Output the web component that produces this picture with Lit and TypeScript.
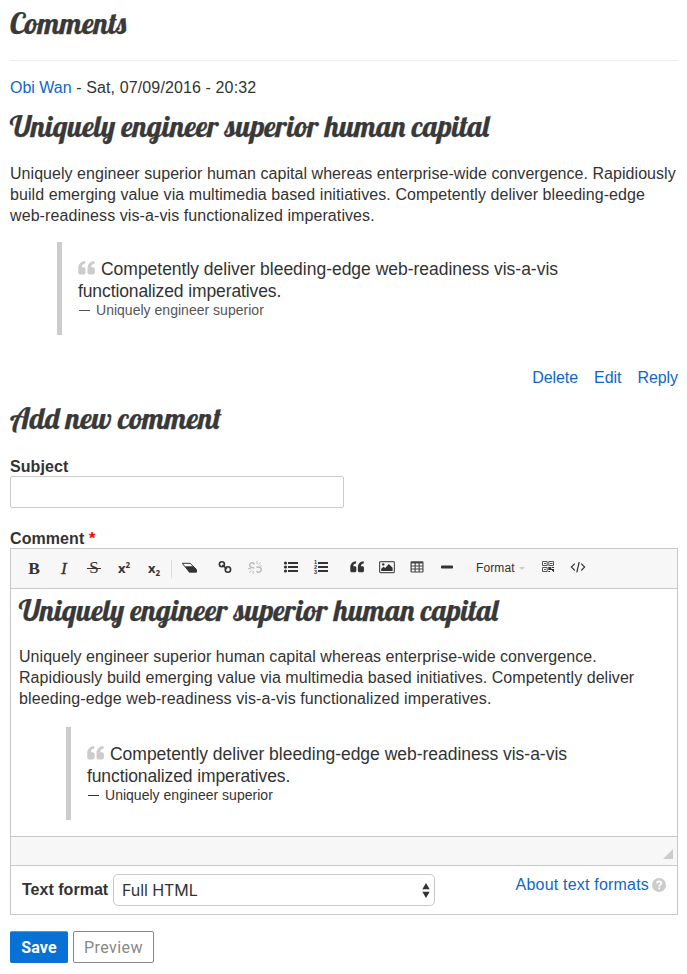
import { LitElement, html, css, svg } from "lit";
import { customElement, property } from "lit/decorators.js";

const quotePath = "M7.300 1C3 1.100.2 4.200.2 8.400v4.200c0 1.100.8 1.900 1.900 1.900h3.600c1.100 0 1.900-.8 1.900-1.900V9.100c0-1.100-.8-1.900-1.900-1.900H3.900C3.900 5.200 5 3.900 7.300 3.800zM16.600 1C12.300 1.100 9.500 4.200 9.500 8.400v4.200c0 1.100.8 1.900 1.900 1.900h3.600c1.100 0 1.900-.8 1.900-1.900V9.100c0-1.100-.8-1.900-1.900-1.900h-1.800C13.200 5.200 14.300 3.900 16.600 3.800z";

const icons: Record<string, unknown> = {
  eraser: svg`<path d="M.2 3.300h7.900l6.200 6v2.600H7.300z" fill="#f7f7f7" stroke="#333" stroke-width="1"/><path d="M3.200 6.300h7.700l3.900 3.700v2.400H7.200z" fill="#333"/>`,
  link: svg`<g fill="none" stroke="#333" stroke-width="1.600"><circle cx="4.900" cy="4.300" r="2.500"/><circle cx="10.900" cy="9.500" r="2.700"/><path d="M5.300 5l4.600 3.800"/></g>`,
  unlink: svg`<g fill="none" stroke="#bbb" stroke-width="1.500"><path d="M7.400 4.500a2.400 2.400 0 1 0-2.800 3l2.600.4M9.600 11a2.500 2.500 0 1 0 2.200-3.800L9.400 6.900"/><path stroke-width="1" d="M10 1v3M13.800 2.400l-2.300 2.200M14.600 6h-2M1 8.700h3M2.200 12.700l2.300-2.300M6.200 13.800v-3"/></g>`,
  ul: svg`<g fill="#333"><circle cx="2.500" cy="3" r="1.600"/><circle cx="2.500" cy="7" r="1.600"/><circle cx="2.500" cy="11" r="1.600"/><path d="M5 2h10v2H5zM5 6h10v2H5zM5 10h10v2H5z"/></g>`,
  ol: svg`<g fill="#333"><path d="M5 2h10v2H5zM5 6h10v2H5zM5 10h10v2H5z"/><g font-family="Liberation Sans" font-size="5.500" font-weight="700"><text x=".9" y="3.900">1</text><text x=".9" y="9">2</text><text x=".9" y="14">3</text></g></g>`,
  quote: svg`<path transform="translate(1.100 .4) scale(.82 .82)" fill="#333" d=${quotePath}/>`,
  image: svg`<rect x=".6" y="1.600" width="14.800" height="11" rx="1" fill="none" stroke="#555" stroke-width="1.200"/><path d="M2.200 11V8.800l2.400-2L6.200 8l3.600-3.900 3.800 3.700V11z" fill="#333"/><circle cx="4.200" cy="4.400" r="1.200" fill="#333"/>`,
  table: svg`<rect x="1.500" y="1.300" width="13" height="11.300" rx="1.300" fill="#444"/><path fill="#f7f7f7" d="M2.700 3.600h2.900v1.800H2.700zM6.700 3.600h2.900v1.800H6.700zM10.700 3.600h2.700v1.800h-2.700zM2.700 6.600h2.900v1.800H2.700zM6.700 6.600h2.900v1.800H6.700zM10.700 6.600h2.700v1.800h-2.700zM2.700 9.600h2.900v1.800H2.700zM6.700 9.600h2.900v1.800H6.700zM10.700 9.600h2.700v1.800h-2.700z"/>`,
  hr: svg`<rect x="2" y="5.500" width="12" height="3" rx=".8" fill="#333"/>`,
  blocks: svg`<g fill="none" stroke="#555"><path d="M2.500 1.500h4.700v4H2.500zM8.800 1.500h4.700v4H8.800zM2.500 7.500h4.700v4H2.500zM4 3.500h2M10 3.500h2.500M4 9.500h2"/></g><path fill="#333" d="M8.300 7h3v2h2.700v2h-2v-1H8.300zM8.300 11h1.700v1H8.300zM13 11h1v1h-1zM12 7h2v1h-2z"/>`,
  code: svg`<path d="M4.800 3.700L1.400 7.100l3.400 3.400M11.200 3.700l3.400 3.400-3.400 3.400M9.200 2L6.800 12.400" fill="none" stroke="#333" stroke-width="1.200"/>`,
};

@customElement("tool-button")
class ToolButton extends LitElement {
  @property() icon = "";
  static styles = css`
    :host { display: flex; width: 30px; height: 30px; align-items: center; justify-content: center; flex: none; }
    svg { display: block; width: 16px; height: 16px; }
  `;
  render() {
    return html`<svg viewBox="0 0 16 16">${icons[this.icon]}</svg>`;
  }
}

@customElement("pull-quote")
class PullQuote extends LitElement {
  static styles = css`
    :host { display: block; box-sizing: border-box; height: 93px; margin-left: 47px; border-left: 5px solid #ccc; padding: 16px 0 0 16px; color: #333; white-space: nowrap; }
    .line { font-size: 17.500px; line-height: 22px; height: 22px; display: flex; align-items: center; }
    .mark { width: 17px; height: 16px; margin: 0 6px 2px 0; flex: none; }
    .a { letter-spacing: -0.020px; }
    .b { letter-spacing: -0.110px; }
    .cite { font-size: 14px; line-height: 17px; color: var(--cite, #555); }
    .dash { display: inline-block; width: 18px; padding-left: 1px; box-sizing: border-box; }
    .dash i { display: block; width: 11px; height: 1px; background: currentColor; position: relative; top: -4px; }
    .c { letter-spacing: 0.020px; }
  `;
  render() {
    return html`
      <div class="line"><svg class="mark" viewBox="0 0 17 16"><path fill="#ccc" d=${quotePath} /></svg><span class="a">Competently deliver bleeding-edge web-readiness vis-a-vis</span></div>
      <div class="line"><span class="b">functionalized imperatives.</span></div>
      <div class="cite"><span class="dash"><i></i></span><span class="c">Uniquely engineer superior</span></div>
    `;
  }
}

@customElement("app-root")
class AppRoot extends LitElement {
  static styles = css`
    :host { display: block; box-sizing: border-box; width: 687px; height: 974px; padding: 0 9px 0 10px; background: #fff; color: #333; font: 16px/21px "Liberation Sans", Arial, sans-serif; overflow: hidden; }
    * { box-sizing: border-box; }
    h2, p { margin: 0; }
    h2 { font: 400 29.300px/40px Lobster, "Liberation Serif", serif; height: 40px; white-space: nowrap; color: #393939; -webkit-text-stroke: .250px #393939; }
    .t1 { height: 60px; padding-top: 3px; font-size: 29.700px; }
    .byline { border-top: 1px solid #eee; height: 46px; padding-top: 16px; }
    .date { letter-spacing: .120px; }
    a { color: #0f66ca; text-decoration: none; }
    .body { white-space: nowrap; padding-top: 17px; height: 96px; }
    .p1 { letter-spacing: .045px; }
    .p2 { letter-spacing: .070px; }
    .p3 { letter-spacing: .090px; }
    .q1 { letter-spacing: .040px; }
    .q2 { letter-spacing: .060px; }
    .q3 { letter-spacing: .100px; }
    .links { display: flex; justify-content: flex-end; gap: 16px; margin-top: 32px; height: 31px; letter-spacing: -.060px; }
    .t3 { height: 58px; font-size: 29.600px; }
    label, .label { font-weight: 700; display: block; line-height: 22px; height: 20px; letter-spacing: .080px; }
    .field { display: block; width: 334px; height: 32px; border: 1px solid #ccc; border-radius: 2px; background: #fff; padding: 0; margin-bottom: 20px; }
    .req { color: #f00; }
    .editor { border: 1px solid #c9c9c9; width: 668px; height: 318px; }
    .bar { display: flex; align-items: center; height: 40px; background: #f7f7f7; border-bottom: 1px solid #c9c9c9; padding: 0 0 2px 8px; }
    .letter { width: 30px; text-align: center; font: 700 17.500px/26px "Liberation Serif", serif; flex: none; }
    .it { font-style: italic; font-weight: 400; -webkit-text-stroke: .300px #333; }
    .strike { font-weight: 400; position: relative; font-size: 17px; }
    .strike::after { content: ""; position: absolute; left: 8px; right: 8px; top: 13px; height: 1px; background: #333; }
    .script { font: 700 13px/26px "Noto Sans", sans-serif; }
    .script small { font-size: 8px; line-height: 0; position: relative; }
    .sup small { top: -5px; }
    .sub small { top: 3px; }
    .sep { width: 1px; height: 18px; background: #ddd; margin: 3px 3px 0 2px; }
    .g { width: 5px; } .h { width: 6px; }
    .format { width: 65px; padding: 1px 0 0 8px; font-size: 12px; letter-spacing: .100px; display: flex; align-items: center; gap: 4px; }
    .caret { border: 3px solid transparent; border-top-color: #ccc; border-bottom: 0; }
    .content { height: 247px; padding: 1px 8px 0; }
    .content .body { height: 97px; padding-top: 16px; }
    .content pull-quote { --cite: #333; }
    .foot { height: 29px; border-top: 1px solid #c9c9c9; background: #f7f7f7; display: flex; justify-content: flex-end; align-items: flex-end; padding: 0 4px 6px; }
    .grip { border-left: 10px solid transparent; border-bottom: 10px solid #ccc; }
    .format-row { border: 1px solid #c9c9c9; border-top: 0; height: 49px; width: 668px; display: flex; padding: 8px 11px 0; margin-bottom: 16px; }
    .format-row .label { line-height: 31px; width: 91px; letter-spacing: .020px; }
    .select { width: 322px; height: 32px; border: 1px solid #c9c9c9; border-radius: 5px; padding: 0 4px 0 8px; display: flex; align-items: center; justify-content: space-between; font-family: Inter, sans-serif; font-size: 16px; letter-spacing: -.080px; }
    .select svg { width: 8px; height: 15px; }
    .about { margin-left: auto; display: flex; gap: 3px; height: 21px; align-items: center; letter-spacing: .200px; }
    .about svg { width: 14px; height: 14px; }
    .actions { display: flex; gap: 5px; }
    .btn { height: 32px; border: 1px solid #888; border-radius: 2px; background: #fff; color: #888; font: 16px/32px Roboto, sans-serif; padding: 0; text-align: center; width: 81px; letter-spacing: .430px; }
    .save { width: 58px; color: #fff; background: #0871d5; border-color: #0871d5; border-top-color: #4a9ae2; font-weight: 700; letter-spacing: .200px; }
  `;

  render() {
    const tool = (name: string) => html`<tool-button icon=${name}></tool-button>`;
    return html`
      <h2 class="t1"><span>Comments</span></h2>
      <div class="byline"><a>Obi Wan</a><span class="date"> - Sat, 07/09/2016 - 20:32</span></div>
      <h2 class="t2"><span>Uniquely engineer superior human capital</span></h2>
      <p class="body"><span class="p1">Uniquely engineer superior human capital whereas enterprise-wide convergence. Rapidiously</span><br /><span class="p2">build emerging value via multimedia based initiatives. Competently deliver bleeding-edge</span><br /><span class="p3">web-readiness vis-a-vis functionalized imperatives.</span></p>
      <pull-quote></pull-quote>
      <div class="links"><a>Delete</a><a>Edit</a><a>Reply</a></div>
      <h2 class="t3"><span>Add new comment</span></h2>
      <label for="subject">Subject</label>
      <input id="subject" class="field" />
      <div class="label">Comment <span class="req">*</span></div>
      <div class="editor">
        <div class="bar">
          <span class="letter">B</span><span class="letter it">I</span><span class="letter strike">S</span>
          <span class="letter script sup">x<small>2</small></span><span class="letter script sub">x<small>2</small></span>
          <i class="sep"></i>${tool("eraser")}<i class="g"></i>${tool("link")}${tool("unlink")}<i class="h"></i>
          ${tool("ul")}${tool("ol")}<i class="h"></i>${tool("quote")}${tool("image")}${tool("table")}${tool("hr")}
          <i class="h"></i><span class="format">Format <i class="caret"></i></span>${tool("blocks")}${tool("code")}
        </div>
        <div class="content">
          <h2 class="t2"><span>Uniquely engineer superior human capital</span></h2>
          <p class="body"><span class="q1">Uniquely engineer superior human capital whereas enterprise-wide convergence.</span><br /><span class="q2">Rapidiously build emerging value via multimedia based initiatives. Competently deliver</span><br /><span class="q3">bleeding-edge web-readiness vis-a-vis functionalized imperatives.</span></p>
          <pull-quote></pull-quote>
        </div>
        <div class="foot"><i class="grip"></i></div>
      </div>
      <div class="format-row">
        <span class="label">Text format</span>
        <div class="select"><span>Full HTML</span><svg viewBox="0 0 8 15"><path d="M4 0l3.700 6.300H.3zM4 15l3.700-6.300H.3z" fill="#333" /></svg></div>
        <a class="about"><span>About text formats</span><svg viewBox="0 0 14 14"><circle cx="7" cy="7" r="7" fill="#ccc" /><path d="M4.800 5.300C5 3.900 5.900 3.300 7 3.300c1.300 0 2.300.8 2.300 2 0 1.600-2.100 1.500-2.100 3.100M7.200 9.600v1.700" fill="none" stroke="#fff" stroke-width="1.700" /></svg></a>
      </div>
      <div class="actions"><button class="btn save">Save</button><button class="btn">Preview</button></div>
    `;
  }
}
